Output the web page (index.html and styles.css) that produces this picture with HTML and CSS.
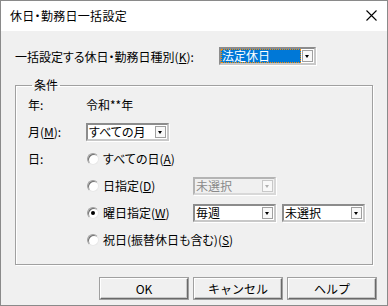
FILE: index.html
```html
<!DOCTYPE html>
<html lang="ja">
<head>
    <meta charset="UTF-8">
    <title>休日・勤務日一括設定</title>
    <link rel="stylesheet" href="styles.css">
</head>
<body>
    <div class="window">
        <div class="titlebar">
            <span class="title">休日・勤務日一括設定</span>
            <svg class="close" viewBox="0 0 11 11" width="11" height="11"><path d="M0.5 0.5L10.5 10.5M10.5 0.5L0.5 10.5" stroke="#000" stroke-width="1.1" fill="none"/></svg>
        </div>
        <div class="content">
            <div class="top-row">
                <span class="top-label">一括設定する休日・勤務日種別(<u>K</u>):</span>
                <div class="combo combo-wide focused">
                    <span class="combo-text"><span class="sel">法定休日</span></span>
                    <span class="combo-btn"></span>
                </div>
            </div>

            <fieldset class="group">
                <legend>条件</legend>
                <div class="grow">
                    <span class="glabel">年:</span>
                    <span>令和**年</span>
                </div>
                <div class="grow">
                    <span class="glabel">月(<u>M</u>):</span>
                    <div class="combo">
                        <span class="combo-text">すべての月</span>
                        <span class="combo-btn"></span>
                    </div>
                </div>
                <div class="grow">
                    <span class="glabel">日:</span>
                    <label class="radio"><span class="dot"></span><span>すべての日(<u>A</u>)</span></label>
                </div>
                <div class="grow">
                    <span class="glabel"></span>
                    <label class="radio radio-short"><span class="dot"></span><span>日指定(<u>D</u>)</span></label>
                    <div class="combo disabled">
                        <span class="combo-text">未選択</span>
                        <span class="combo-btn"></span>
                    </div>
                </div>
                <div class="grow">
                    <span class="glabel"></span>
                    <label class="radio radio-short"><span class="dot checked"></span><span>曜日指定(<u>W</u>)</span></label>
                    <div class="combo">
                        <span class="combo-text">毎週</span>
                        <span class="combo-btn"></span>
                    </div>
                    <div class="combo">
                        <span class="combo-text">未選択</span>
                        <span class="combo-btn"></span>
                    </div>
                </div>
                <div class="grow">
                    <span class="glabel"></span>
                    <label class="radio"><span class="dot"></span><span>祝日(振替休日も含む)(<u>S</u>)</span></label>
                </div>
            </fieldset>

            <div class="buttons">
                <button>OK</button>
                <button>キャンセル</button>
                <button>ヘルプ</button>
            </div>
        </div>
    </div>
</body>
</html>
```

FILE: styles.css
```css
body {
    margin: 0;
    padding: 0;
    font-family: "Noto Sans CJK JP", "Noto Sans", sans-serif;
    font-size: 12px;
    font-feature-settings: "palt";
    color: #000;
    background-color: #f0f0f0;
}
.window {
    width: 388px;
    height: 306px;
    box-sizing: border-box;
    border: 1px solid #8a8a8a;
    background-color: #f0f0f0;
    display: flex;
    flex-direction: column;
}
.titlebar {
    height: 30px;
    background-color: #fff;
    display: flex;
    align-items: center;
    justify-content: space-between;
    padding: 0 10px 0 9px;
}
.title {
    font-size: 12px;
    line-height: 14px;
    letter-spacing: 0.3px;
}
.close {
    margin-top: -1px;
}
.content {
    flex: 1;
    display: flex;
    flex-direction: column;
}
u {
    text-decoration: underline;
    text-underline-offset: 1px;
}
.top-row {
    display: flex;
    align-items: center;
    margin-top: 16px;
    padding-left: 14px;
    height: 18px;
}
.top-label {
    width: 204px;
}
.combo {
    box-sizing: border-box;
    width: 83px;
    height: 18px;
    border: 2px solid #8c8c8c;
    border-right-color: #c8c8c8;
    border-bottom-color: #c8c8c8;
    box-shadow: 1px 1px 0 #fff;
    background-color: #fff;
    display: flex;
    align-items: center;
    margin-right: 6px;
}
.combo-wide {
    width: 97px;
}
.combo-text {
    flex: 1;
    padding-left: 1px;
    line-height: 14px;
    white-space: nowrap;
}
.focused .combo-text {
    padding: 0;
    align-self: stretch;
    display: flex;
}
.sel {
    flex: 1;
    background-color: #0078d7;
    color: #fff;
    outline: 1px dotted #ff8c00;
    outline-offset: -1px;
    line-height: 14px;
    padding-left: 1px;
}
.combo-btn {
    width: 11px;
    height: 12px;
    margin: 0 1px;
    box-sizing: border-box;
    border: 1px solid #a0a0a0;
    background-color: #f8f8f8;
    position: relative;
}
.combo-btn::after {
    content: '';
    position: absolute;
    left: 2px;
    top: 4px;
    border-left: 2.5px solid transparent;
    border-right: 2.5px solid transparent;
    border-top: 3px solid #000;
}
.disabled {
    border-color: #b4b4b4;
    border-right-color: #d8d8d8;
    border-bottom-color: #d8d8d8;
    background-color: #f0f0f0;
    color: #8a8a8a;
}
.disabled .combo-btn {
    border-color: #c8c8c8;
}
.disabled .combo-btn::after {
    border-top-color: #b0b0b0;
}
.group {
    margin: 13px 14px 0 14px;
    padding: 0 0 11px 12px;
    border: 1px solid #a0a0a0;
    box-shadow: inset 1px 1px 0 #fff, 1px 1px 0 #fff;
    min-width: 0;
}
.group legend {
    margin-left: 4px;
    padding: 0 2px;
    line-height: 14px;
}
.grow {
    display: flex;
    align-items: center;
    height: 27px;
}
.grow:first-of-type {
    margin-top: -1px;
}
.glabel {
    width: 58px;
}
.radio {
    display: flex;
    align-items: center;
    padding-left: 1px;
}
.radio-short {
    width: 106px;
}
.dot {
    width: 12px;
    height: 12px;
    margin-right: 4px;
    box-sizing: border-box;
    border-radius: 50%;
    border: 1px solid #a0a0a0;
    border-right-color: #e8e8e8;
    border-bottom-color: #e8e8e8;
    background-color: #fff;
    box-shadow: inset 1px 1px 0 #707070;
    display: flex;
    align-items: center;
    justify-content: center;
}
.dot.checked::after {
    content: '';
    width: 4px;
    height: 4px;
    border-radius: 50%;
    background-color: #000;
}
.buttons {
    display: flex;
    justify-content: flex-end;
    gap: 6px;
    margin-top: 13px;
    padding-right: 11px;
}
.buttons button {
    width: 88px;
    height: 21px;
    padding: 0;
    font-family: "Noto Sans CJK JP", "Noto Sans", sans-serif;
    font-size: 12px;
    color: #000;
    background-color: #f0f0f0;
    border: 1px solid #fff;
    border-right-color: #696969;
    border-bottom-color: #696969;
    box-shadow: 1px 1px 0 #a0a0a0, inset -1px -1px 0 #c8c8c8;
    outline: 1px solid #a0a0a0;
    outline-offset: 0;
}
```
